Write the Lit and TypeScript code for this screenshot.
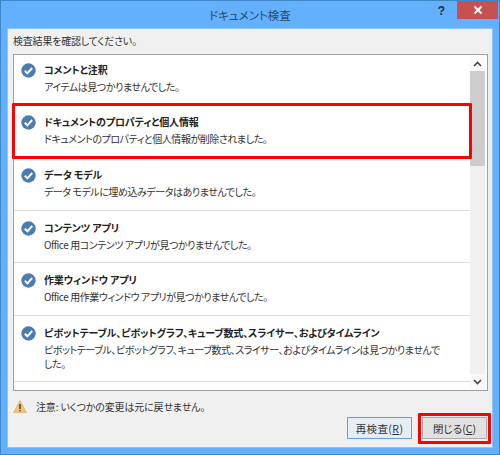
import { LitElement, html, css } from "lit";
import { customElement } from "lit/decorators.js";

const rows = [
  { t: "コメントと注釈", d: "アイテムは見つかりませんでした。", h: 50 },
  { t: "ドキュメントのプロパティと個人情報", d: "ドキュメントのプロパティと個人情報が削除されました。", h: 53 },
  { t: "データ モデル", d: "データ モデルに埋め込みデータはありませんでした。", h: 53 },
  { t: "コンテンツ アプリ", d: "Office 用コンテンツ アプリが見つかりませんでした。", h: 52 },
  { t: "作業ウィンドウ アプリ", d: "Office 用作業ウィンドウ アプリが見つかりませんでした。", h: 53 },
  { t: "ピボットテーブル、ピボットグラフ、キューブ数式、スライサー、およびタイムライン", d: "ピボットテーブル、ピボットグラフ、キューブ数式、スライサー、およびタイムラインは見つかりませんで\nした。", h: 66 },
];

@customElement("app-root")
export class AppRoot extends LitElement {
  static styles = css`
    :host { display: block; width: 500px; height: 455px; font-family: "Noto Sans CJK JP", "Liberation Sans", sans-serif; color: #333; font-feature-settings: "palt"; }
    .win { position: relative; box-sizing: border-box; width: 500px; height: 455px; background: #62b0ff; border: 1px solid #3f86c4; display: flex; flex-direction: column; padding: 0 6px 6px 6px; }
    .title { height: 27px; flex: none; display: flex; align-items: center; justify-content: center; font-size: 11.5px; color: #2f4a66; position: relative; }
    .help { position: absolute; right: 48px; top: 3px; font: bold 12px "Liberation Sans", sans-serif; color: #1c2b3a; }
    .close { position: absolute; right: -5px; top: 0; width: 41px; height: 18px; background: #c75050; display: flex; align-items: center; justify-content: center; }
    .body { flex: 1; background: #f0f0f0; display: flex; flex-direction: column; padding: 4px 4px 0 5px; min-height: 0; border: 1px solid #8fc3f5; }
    .lead { font-size: 10px; letter-spacing: -0.2px; line-height: 15px; height: 21px; color: #333; }
    .box { height: 337px; flex: none; box-sizing: border-box; border: 1px solid #a0a0a0; background: #fff; display: flex; }
    .list { flex: 1; min-width: 0; overflow: hidden; }
    .row { box-sizing: border-box; border-bottom: 1px solid #dcdcdc; display: flex; gap: 8px; padding: 10px 0 0 7px; }
    .row:first-child { padding-top: 8px; }
    .check { flex: none; width: 15px; height: 15px; }
    .text { margin-top: -1px; }
    .t { font-size: 10px; font-weight: 700; letter-spacing: -0.15px; line-height: 15px; color: #222; white-space: nowrap; }
    .d { font-size: 10px; letter-spacing: -0.45px; line-height: 14px; margin-top: 3px; color: #333; white-space: pre-line; }
    .sb { width: 15px; flex: none; display: flex; flex-direction: column; margin: 1px 2px 1px 0; }
    .arrow { height: 15px; flex: none; display: flex; align-items: center; justify-content: center; background: #fafafa; }
    .thumb { height: 95px; background: #cdcdcd; flex: none; }
    .space { flex: 1; background: #f0f0f0; }
    .warn { display: flex; align-items: center; gap: 9px; height: 22px; margin-top: 4px; font-size: 10px; letter-spacing: -0.15px; }
    .warn svg { flex: none; }
    .btns { display: flex; justify-content: flex-end; gap: 10px; padding-right: 1px; }
    .btn { box-sizing: border-box; height: 22px; width: 65px; display: flex; align-items: center; justify-content: center; background: #e1e1e1; border: 1px solid #acacac; font-size: 10.5px; color: #333; }
    .primary { border-color: #5da3e0; background: #e6eef5; letter-spacing: 0.4px; }
    .btn u { text-underline-offset: 1px; }
    .mark { position: absolute; box-sizing: border-box; border: 3px solid #f00; border-radius: 1px; pointer-events: none; }
    .m1 { left: 11px; top: 102px; width: 460px; height: 56px; }
    .m2 { left: 417px; top: 412px; width: 73px; height: 31px; }
  `;

  render() {
    return html`<div class="win">
      <div class="title">ドキュメント検査
        <span class="help">?</span>
        <span class="close"><svg width="10" height="10" viewBox="0 0 10 10"><path d="M1.5 1.5 8.5 8.5M8.5 1.5 1.5 8.5" stroke="#fff" stroke-width="2" fill="none"/></svg></span>
      </div>
      <div class="body">
        <div class="lead">検査結果を確認してください。</div>
        <div class="box">
          <div class="list">
            ${rows.map(r => html`<div class="row" style="height:${r.h}px">
              <svg class="check" viewBox="0 0 15 15"><circle cx="7.5" cy="7.5" r="7.2" fill="#4a7cb0"/><path d="M3.8 7.8 6.4 10.3 11.2 5" stroke="#fff" stroke-width="2" fill="none"/></svg>
              <div class="text"><div class="t">${r.t}</div><div class="d">${r.d}</div></div>
            </div>`)}
          </div>
          <div class="sb">
            <div class="arrow"><svg width="9" height="6" viewBox="0 0 9 6"><path d="M1 5 4.5 1.5 8 5" stroke="#444" stroke-width="1.6" fill="none"/></svg></div>
            <div class="thumb"></div>
            <div class="space"></div>
            <div class="arrow"><svg width="9" height="6" viewBox="0 0 9 6"><path d="M1 1 4.5 4.5 8 1" stroke="#444" stroke-width="1.6" fill="none"/></svg></div>
          </div>
        </div>
        <div class="warn">
          <svg width="14" height="13" viewBox="0 0 14 13"><path d="M7 .5 13.5 12.5H.5Z" fill="#f0c27a" stroke="#d9a860" stroke-width=".6"/><rect x="6.3" y="4" width="1.4" height="5" fill="#4a3a20"/><rect x="6.3" y="10" width="1.4" height="1.4" fill="#4a3a20"/></svg>
          <span>注意: いくつかの変更は元に戻せません。</span>
        </div>
        <div class="btns">
          <div class="btn primary"><span>再検査(<u>R</u>)</span></div>
          <div class="btn"><span>閉じる(<u>C</u>)</span></div>
        </div>
      </div>
      <div class="mark m1"></div>
      <div class="mark m2"></div>
    </div>`;
  }
}
